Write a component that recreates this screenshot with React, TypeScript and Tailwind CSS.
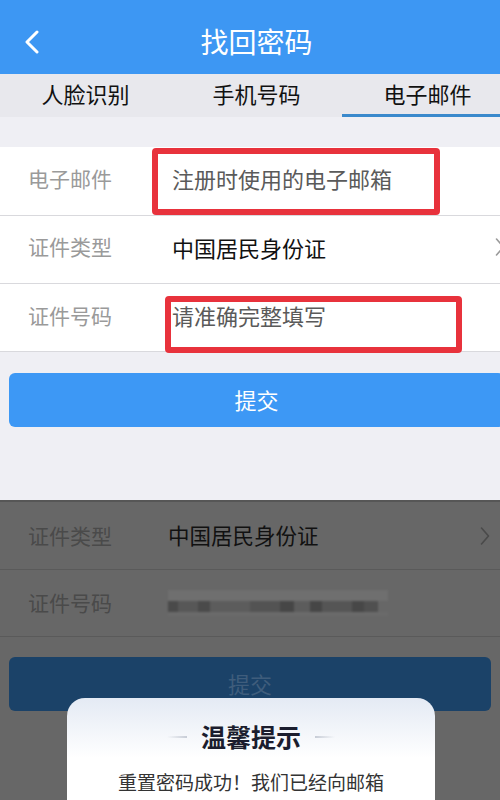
import React from "react";

const font = { fontFamily: '"Noto Sans CJK SC", "Noto Sans", sans-serif' };

function Chevron({ className, color }: { className?: string; color: string }) {
  return (
    <svg className={className} width="10" height="20" viewBox="0 0 10 20" fill="none">
      <path d="M1.5 2 L8.5 10 L1.5 18" stroke={color} strokeWidth="1.6" strokeLinecap="round" strokeLinejoin="round" />
    </svg>
  );
}

function TopScreen() {
  return (
    <div className="relative h-[500px] w-[500px] overflow-hidden bg-[#efeff4]">
      <div className="flex w-[513px] flex-col">
        {/* Header */}
        <div className="relative flex h-[74px] items-center justify-center bg-[#3d97f3]">
          <svg className="absolute left-[24px] top-[30px]" width="16" height="24" viewBox="0 0 16 24" fill="none">
            <path d="M13 2 L3 12 L13 22" stroke="white" strokeWidth="3" strokeLinecap="round" strokeLinejoin="round" />
          </svg>
          <span className="pt-[8px] text-[28px] text-white" style={font}>找回密码</span>
        </div>
        {/* Tabs */}
        <div className="grid h-[43px] grid-cols-3 bg-[#e8e8ed]">
          <div className="flex items-center justify-center pb-[5px] text-[22px] text-[#111]" style={font}>人脸识别</div>
          <div className="flex items-center justify-center pb-[5px] text-[22px] text-[#111]" style={font}>手机号码</div>
          <div className="flex items-center justify-center border-b-[3px] border-[#3a89cc] pb-[2px] text-[22px] text-[#111]" style={font}>电子邮件</div>
        </div>
        <div className="h-[30px]" />
        {/* Form rows */}
        <div className="flex flex-col bg-white">
          <div className="flex h-[69px] items-center border-b border-[#d9d9dd] pb-[5px] pl-[28px]">
            <span className="w-[144px] text-[21px] text-[#9a9a9a]" style={font}>电子邮件</span>
            <span className="text-[22px] text-[#5a5a5a]" style={font}>注册时使用的电子邮箱</span>
          </div>
          <div className="flex h-[68px] items-center border-b border-[#d9d9dd] pb-[5px] pl-[28px] pr-[8px]">
            <span className="w-[144px] text-[21px] text-[#9a9a9a]" style={font}>证件类型</span>
            <span className="flex-1 text-[22px] text-[#111]" style={font}>中国居民身份证</span>
            <Chevron color="#9a9a9a" />
          </div>
          <div className="flex h-[68px] items-center border-b border-[#d9d9dd] pb-[4px] pl-[28px]">
            <span className="w-[144px] text-[21px] text-[#9a9a9a]" style={font}>证件号码</span>
            <span className="text-[22px] text-[#5a5a5a]" style={font}>请准确完整填写</span>
          </div>
        </div>
        {/* Submit */}
        <div className="px-[9px] pt-[21px]">
          <div className="flex h-[54px] items-center justify-center rounded-[6px] bg-[#3d98f5] pb-[2px] text-[22px] text-white" style={font}>
            提交
          </div>
        </div>
      </div>
      {/* Red annotation boxes */}
      <div className="absolute left-[152px] top-[148px] h-[67px] w-[288px] rounded-[4px] border-[6px] border-[#e8323c]" />
      <div className="absolute left-[165px] top-[296px] h-[57px] w-[297px] rounded-[4px] border-[6px] border-[#e8323c]" />
    </div>
  );
}

function BottomScreen() {
  return (
    <div className="relative h-[300px] w-[500px] overflow-hidden border-t-2 border-[#565656] bg-[#676767]">
      <div className="flex h-[68px] items-center border-b border-[#5a5a5a] pl-[28px] pr-[10px]">
        <span className="w-[140px] text-[21px] text-[#4a4a4a]" style={font}>证件类型</span>
        <span className="flex-1 text-[21.5px] text-[#111]" style={font}>中国居民身份证</span>
        <Chevron color="#4a4a4a" />
      </div>
      <div className="flex h-[67px] items-center border-b border-[#5a5a5a] pl-[28px]">
        <span className="w-[140px] text-[21px] text-[#4a4a4a]" style={font}>证件号码</span>
        <div className="flex h-[26px] w-[220px] flex-col blur-[1px]">
          <div className="h-[11px] w-full bg-[#6f6f6f]" />
          <div className="flex h-[11px] w-full">
            <div className="w-[10px] bg-[#4a4a4a]" />
            <div className="w-[20px] bg-[#575757]" />
            <div className="w-[12px] bg-[#4a4a4a]" />
            <div className="w-[40px] bg-[#5c5c5c]" />
            <div className="w-[30px] bg-[#535353]" />
            <div className="w-[14px] bg-[#464646]" />
            <div className="w-[16px] bg-[#5c5c5c]" />
            <div className="w-[12px] bg-[#464646]" />
            <div className="w-[30px] bg-[#555]" />
            <div className="w-[12px] bg-[#474747]" />
            <div className="w-[14px] bg-[#505050]" />
          </div>
          <div className="h-[4px] w-full bg-[#6b6b6b]" />
        </div>
      </div>
      <div className="px-[9px] pt-[20px]">
        <div className="flex h-[54px] items-start justify-center rounded-[6px] bg-[#1b4268] pt-[10px] text-[22px] text-[#3f5d7c]" style={font}>
          提交
        </div>
      </div>
      {/* Modal */}
      <div className="absolute left-[67px] top-[196px] h-[120px] w-[368px] rounded-t-[18px] bg-gradient-to-b from-[#e4eaf4] via-white to-white">
        <div className="flex items-center justify-center gap-[14px] pt-[20px]">
          <div className="h-[2px] w-[20px] bg-gradient-to-r from-transparent to-[#c7ccd6]" />
          <span className="text-[25px] font-bold text-[#1b1d2e]" style={font}>温馨提示</span>
          <div className="h-[2px] w-[20px] bg-gradient-to-l from-transparent to-[#c7ccd6]" />
        </div>
        <div className="pt-[12px] text-center text-[19px] text-[#333]" style={font}>重置密码成功！我们已经向邮箱</div>
      </div>
    </div>
  );
}

export default function App() {
  return (
    <div className="flex h-[800px] w-[500px] flex-col overflow-hidden">
      <TopScreen />
      <BottomScreen />
    </div>
  );
}
